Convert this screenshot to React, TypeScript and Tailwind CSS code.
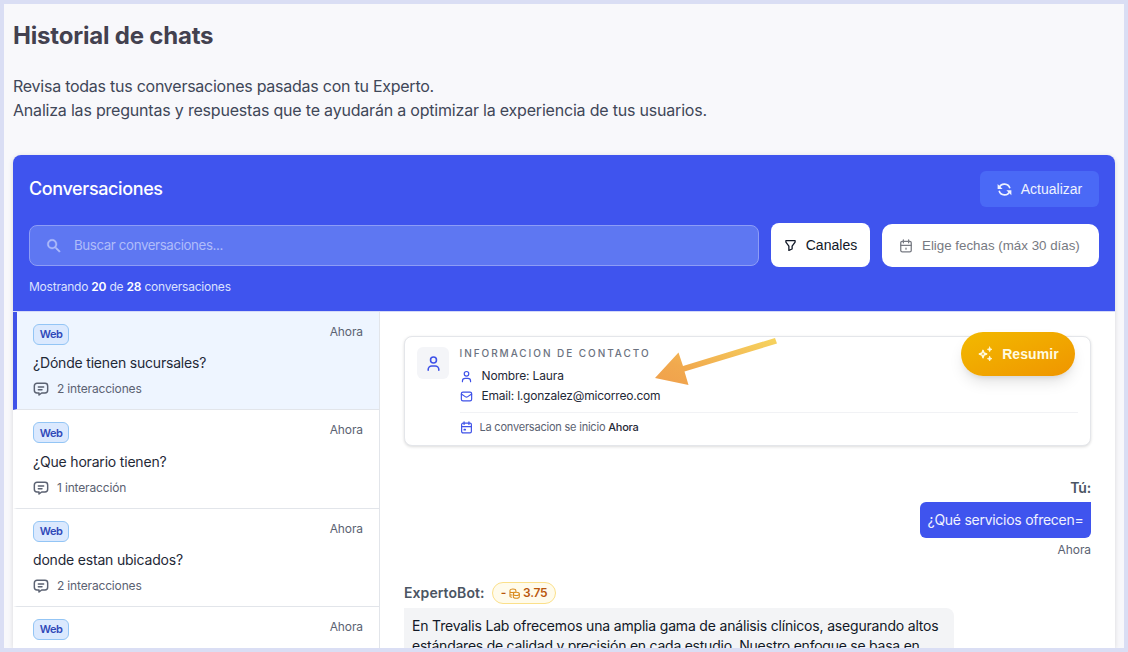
import type { ReactNode } from 'react';

type IconProps = { className?: string };

function Svg({ className = '', width = 2.2, children }: IconProps & { width?: number; children: ReactNode }) {
  return (
    <svg viewBox="0 0 24 24" fill="none" stroke="currentColor" strokeWidth={width} strokeLinecap="round" strokeLinejoin="round" className={`shrink-0 ${className}`}>
      {children}
    </svg>
  );
}

const RefreshIcon = ({ className }: IconProps) => (
  <svg viewBox="0 0 24 24" fill="none" stroke="currentColor" strokeWidth={2.6} className={`shrink-0 ${className}`}>
    <path d="M3.5 9.2A9 9 0 0 1 20.6 10M20.5 14.8A9 9 0 0 1 3.4 14" />
    <path d="M1 3v8h8zM23 21v-8h-8z" fill="currentColor" stroke="none" />
  </svg>
);

const SearchIcon = ({ className }: IconProps) => (
  <svg viewBox="0 0 24 24" fill="currentColor" className={`shrink-0 ${className}`}>
    <path d="M15.5 14h-.79l-.28-.27A6.471 6.471 0 0 0 16 9.5 6.5 6.5 0 1 0 9.5 16c1.61 0 3.09-.59 4.23-1.57l.27.28v.79l5 4.99L20.49 19l-4.99-5zm-6 0C7.01 14 5 11.99 5 9.5S7.01 5 9.5 5 14 7.01 14 9.5 11.99 14 9.5 14z" stroke="currentColor" strokeWidth="0.5" />
  </svg>
);

const FunnelIcon = ({ className }: IconProps) => (
  <Svg className={className} width={2.4}>
    <path d="M3.500 3h17v2.600l-5.500 7.400v5.500l-6 2.500v-8l-5.500-7.400z" />
  </Svg>
);

const ChatIcon = ({ className }: IconProps) => (
  <Svg className={className}>
    <path d="M6 3.500h12a4 4 0 0 1 4 4v6.500a4 4 0 0 1-4 4H13L9 21v-3H6a4 4 0 0 1-4-4V7.500a4 4 0 0 1 4-4zM8 9h8M8 13h5.500" />
  </Svg>
);

const UserIcon = ({ className }: IconProps) => (
  <Svg className={className}>
    <circle cx="12" cy="7" r="4.200" />
    <path d="M4.500 21.500v-1a5 5 0 0 1 5-5h5a5 5 0 0 1 5 5v1" />
  </Svg>
);

const MailIcon = ({ className }: IconProps) => (
  <Svg className={className}>
    <rect x="2.500" y="4" width="19" height="16" rx="3" />
    <path d="M2.500 7.500l7.800 5.200a3 3 0 0 0 3.400 0l7.800-5.200" />
  </Svg>
);

const CalendarIcon = ({ className }: IconProps) => (
  <Svg className={className}>
    <rect x="3" y="4" width="18" height="18" rx="2.500" />
    <path d="M7.500 1.500v5M16.500 1.500v5M3 10.500h18" />
    <path d="M8 16h1.500" strokeWidth="3.400" />
  </Svg>
);

const DateIcon = ({ className }: IconProps) => (
  <Svg className={className}>
    <rect x="3" y="4" width="18" height="18" rx="2.500" />
    <path d="M7.500 1.500v5M16.500 1.500v5M3 11h18M12 15.500v2" />
  </Svg>
);

const SparkIcon = ({ className }: IconProps) => (
  <Svg className={className}>
    <path d="M9 6.500l1.500 4L14.500 12l-4 1.500-1.500 4-1.500-4-4-1.500 4-1.500z" width="2.600" />
    <path d="M19 1.500l1 2.500 2.500 1-2.500 1-1 2.500-1-2.500-2.500-1 2.500-1zM19 15.500l1 2.500 2.500 1-2.500 1-1 2.500-1-2.500-2.500-1 2.500-1z" fill="currentColor" strokeWidth="1" />
  </Svg>
);

const CoinsIcon = ({ className }: IconProps) => (
  <Svg className={className}>
    <path d="M2 18V6c0-5 13-5 13 0v2M2 7c0 3 6 4 9 2M2 13c0 1.500 2 2.300 4.500 2.500M2 18c0 1 1.500 2 4 2.300" />
    <ellipse cx="16" cy="13" rx="6.500" ry="3.500" />
    <path d="M9.500 13v6c0 4.500 13 4.500 13 0v-6" />
  </Svg>
);

type Conversation = { id: number; title?: string; count?: string; active?: boolean };

const conversations: Conversation[] = [
  { id: 1, title: '¿Dónde tienen sucursales?', count: '2 interacciones', active: true },
  { id: 2, title: '¿Que horario tienen?', count: '1 interacción' },
  { id: 3, title: 'donde estan ubicados?', count: '2 interacciones' },
  { id: 4 },
];

function ConversationItem({ title, count, active }: Conversation) {
  return (
    <li className={`h-[98.4px] shrink-0 border-b border-b-[#e2e5ea] border-l-4 px-4 pt-3 ${active ? 'border-l-[#3f52e8] bg-[#eef5ff]' : 'border-l-transparent'}`}>
      <div className="flex items-start justify-between">
        <span className="flex h-[21px] w-9 items-center justify-center rounded-md border border-[#93c5f5] bg-[#dbe9fe] text-[11px] font-semibold tracking-[-0.5px] text-[#2f48b8]">Web</span>
        <span className="text-[12px] leading-4 tracking-[-0.1px] text-[#5b6272]">Ahora</span>
      </div>
      {title && <p className="mt-[8.3px] text-[14px] leading-5 tracking-[-0.19px] text-[#1f2937]">{title}</p>}
      {count && (
        <div className="mt-2 flex items-center gap-2 text-[12px] leading-4 tracking-[-0.16px] text-[#5b6272]">
          <ChatIcon className="size-4" />
          {count}
        </div>
      )}
    </li>
  );
}

function ContactCard() {
  return (
    <section className="relative flex h-[110px] shrink-0 gap-[10.5px] rounded-lg border border-[#e4e6ea] bg-white px-3 pt-2.5 shadow-[0_1px_3px_rgba(0,0,0,0.14)]">
      <div className="flex size-8 shrink-0 items-center justify-center rounded-md bg-[#f4f5f8] text-[#3f52e8]">
        <UserIcon className="size-[17px]" />
      </div>
      <div className="flex-1 text-[12px]">
        <h3 className="-mt-px text-[10px] leading-[14px] font-medium tracking-[1.95px] text-[#6b7280]">INFORMACION DE CONTACTO</h3>
        <div className="mt-1.5 flex h-5 items-center gap-[9px] tracking-[-0.14px] text-[#1f2937]">
          <UserIcon className="size-[13px] text-[#3f52e8]" />
          <span>Nombre: Laura</span>
        </div>
        <div className="flex h-5 items-center gap-[9px] tracking-[-0.21px] text-[#1f2937]">
          <MailIcon className="size-[13px] text-[#3f52e8]" />
          <span>Email: l.gonzalez@micorreo.com</span>
        </div>
        <div className="mt-1.5 flex h-[29px] items-center gap-[7px] border-t border-[#f1f2f5] text-[11px] tracking-[-0.21px] text-[#5b6272]">
          <CalendarIcon className="size-[13px] text-[#3f52e8]" />
          <span>La conversacion se inicio <span className="font-medium text-[#1f2937]">Ahora</span></span>
        </div>
      </div>
      <svg viewBox="0 0 122 50" className="absolute top-0 left-[250px] h-[50px] w-[122px]">
        <defs>
          <linearGradient id="arrow" x1="0" y1="1" x2="1" y2="0">
            <stop offset="0" stopColor="#f0a04c" />
            <stop offset="0.300" stopColor="#f1a94e" />
            <stop offset="1" stopColor="#f6d45f" />
          </linearGradient>
        </defs>
        <path d="M0 41L23.500 15.500L28 29L120 1L122 6.500L29.500 34.500L33.500 48z" fill="url(#arrow)" />
      </svg>
      <button className="absolute top-[-5px] right-[15px] flex h-11 w-[114px] items-center justify-center gap-[9px] rounded-full bg-linear-to-br from-[#f2b900] to-[#ef9500] font-['Liberation_Sans',sans-serif] text-[14px] font-bold tracking-[0.1px] text-[#fffbe0] shadow-[0_8px_15px_-3px_rgba(0,0,0,0.13),0_4px_6px_-4px_rgba(0,0,0,0.12)]">
        <SparkIcon className="size-4" />
        Resumir
      </button>
    </section>
  );
}

export default function App() {
  return (
    <div className="h-[652px] w-[1128px] overflow-hidden border-4 border-[#dadef4] bg-[#f8f8fb] px-[9px] font-[Inter,sans-serif]">
      <h1 className="mt-4 text-[24px] leading-8 font-bold tracking-[-0.2px] text-[#43414f]">Historial de chats</h1>
      <p className="mt-[22px] text-[16px] leading-6 tracking-[-0.25px] text-[#3f4758]">
        Revisa todas tus conversaciones pasadas con tu Experto.
        <br />
        <span className="tracking-[-0.2px]">Analiza las preguntas y respuestas que te ayudarán a optimizar la experiencia de tus usuarios.</span>
      </p>
      <main className="mt-[33px] flex h-[493px] flex-col overflow-hidden rounded-t-lg bg-white shadow-[0_1px_5px_rgba(0,0,0,0.13)]">
        <header className="h-[157px] shrink-0 border-b border-[#d5daf8] bg-[#3f54ee] p-4">
          <div className="flex h-9 items-center justify-between">
            <h2 className="-mt-0.5 text-[18px] font-medium tracking-[-0.38px] text-white">Conversaciones</h2>
            <button className="flex h-9 w-[119px] items-center justify-center gap-[9px] rounded-md bg-[#4a69f6] font-['Liberation_Sans',sans-serif] text-[14px] text-[#eef2ff]">
              <RefreshIcon className="size-[15px]" />
              Actualizar
            </button>
          </div>
          <div className="mt-4 flex h-11 items-center gap-3">
            <div className="mt-px flex h-[41px] flex-1 items-center gap-[11px] rounded-lg border border-[#8d9df6] bg-[#5e77f2] pl-[15px] text-[13.33px] tracking-[-0.4px] text-[#afbcfa]">
              <SearchIcon className="size-[18px]" />
              Buscar conversaciones...
            </div>
            <button className="flex h-11 w-[99px] items-center justify-center gap-[9px] rounded-lg bg-white font-['Liberation_Sans',sans-serif] text-[14px] tracking-[0.02px] text-[#111827]">
              <FunnelIcon className="size-[13px]" />
              Canales
            </button>
            <div className="mt-px flex h-[43px] w-[217px] items-center gap-[9px] rounded-[10px] bg-white pl-[17px] font-['Liberation_Sans',sans-serif] text-[13.33px] text-[#777a82]">
              <DateIcon className="size-3.5" />
              Elige fechas (máx 30 días)
            </div>
          </div>
          <p className="mt-3 text-[12px] leading-4 tracking-[-0.22px] text-[#dbe1fe]">
            Mostrando <b className="font-semibold text-white">20</b> de <b className="font-semibold text-white">28</b> conversaciones
          </p>
        </header>
        <div className="flex min-h-0 flex-1">
          <ul className="w-[367px] shrink-0 border-r border-[#e2e5ea]">
            {conversations.map((c) => (
              <ConversationItem key={c.id} {...c} />
            ))}
          </ul>
          <div className="flex flex-1 flex-col px-6 pt-6">
            <ContactCard />
            <div className="mt-8 flex flex-col items-end">
              <span className="text-[14px] leading-5 font-semibold tracking-[-0.2px] text-[#4b5563]">Tú:</span>
              <p className="mt-1 flex h-9 w-[171px] items-center justify-center rounded-md rounded-tr-none bg-[#3f54ee] pb-px text-[14px] tracking-[-0.27px] whitespace-nowrap text-[#f0f2ff]">¿Qué servicios ofrecen=</p>
              <span className="mt-1 text-[12px] leading-4 tracking-[-0.07px] text-[#5b6272]">Ahora</span>
            </div>
            <div className="mt-6 flex h-[22px] shrink-0 items-center gap-2">
              <span className="w-20 pb-0.5 text-[14px] font-semibold tracking-[0.07px] whitespace-nowrap text-[#4b5563]">ExpertoBot:</span>
              <span className="flex h-[22px] w-16 items-center justify-center gap-[3px] rounded-full border border-[#fbe08a] bg-[#fffbeb] text-[12px] font-semibold tracking-[-0.3px] text-[#b9560c]">
                -
                <CoinsIcon className="size-[11px] text-[#d98a1c]" />
                3.75
              </span>
            </div>
            <div className="mt-1 w-[550px] shrink-0 rounded-lg rounded-tl-none bg-[#f3f4f6] p-2 text-[14px] leading-5 tracking-[-0.18px] whitespace-nowrap text-[#111827]">
              En Trevalis Lab ofrecemos una amplia gama de análisis clínicos, asegurando altos
              <br />
              <span className="tracking-[-0.24px]">estándares de calidad y precisión en cada estudio. Nuestro enfoque se basa en</span>
            </div>
          </div>
        </div>
      </main>
    </div>
  );
}
